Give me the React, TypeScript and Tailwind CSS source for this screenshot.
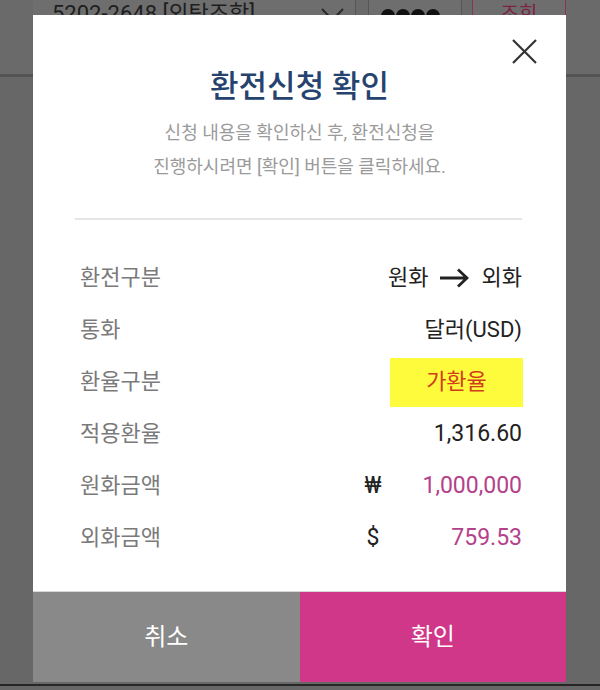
import React from "react";

function Row({ label, children }: { label: string; children: React.ReactNode }) {
  return (
    <div className="flex h-[52px] items-center justify-between">
      <span className="text-[22px] leading-[30px] text-[#7a7a7a]">{label}</span>
      <div className="flex items-center">{children}</div>
    </div>
  );
}

function Amount({ sym, value }: { sym: string; value: string }) {
  return (
    <div className="flex items-center">
      <span className="w-[24px] text-center text-[23px] leading-[30px] text-[#222]">{sym}</span>
      <span className="w-[137px] text-right text-[23px] leading-[30px] text-[#b4418a]">{value}</span>
    </div>
  );
}

export default function App() {
  return (
    <div className="relative h-[690px] w-[600px] overflow-hidden bg-[#676767] font-['Roboto','Noto_Sans_CJK_KR',sans-serif]">
      {/* background page */}
      <div className="flex h-full flex-col">
        <div className="flex h-[77px] items-start border-b-[3px] border-[#535353] bg-[#6a6a6a] pl-[33px]">
          <div className="-mt-[5px] flex h-[37px] w-[323px] items-center justify-between border-r border-[#555] bg-[#6e6e6e] pl-[19px] pr-[11px]">
            <span className="text-[22px] leading-[26px] text-[#1e1e1e]">5202-2648 [외탁조합]</span>
            <svg width="23" height="14" viewBox="0 0 23 14" className="mt-[2px]">
              <path d="M1 1L11.5 12L22 1" fill="none" stroke="#2a2a2a" strokeWidth="2" />
            </svg>
          </div>
          <div className="-mt-[5px] ml-[12px] flex h-[37px] w-[94px] items-center gap-[1px] border-x border-[#555] bg-[#6e6e6e] pl-[12px]">
            {[0, 1, 2, 3].map((i) => (
              <span key={i} className="mt-[4px] h-[14px] w-[14px] rounded-full bg-[#111]" />
            ))}
          </div>
          <div className="-mt-[5px] ml-[10px] flex h-[37px] w-[94px] items-center justify-center border border-[#8b3552] bg-[#6e6e6e]">
            <span className="text-[20px] leading-[26px] text-[#7d2444]">조회</span>
          </div>
        </div>
        <div className="flex-1" />
        <div className="mb-[4px] h-[2px] bg-[#262626]" />
      </div>

      {/* modal */}
      <div className="absolute left-[33px] top-[15px] flex h-[667px] w-[533px] flex-col bg-white">
        <button className="absolute right-[29px] top-[24px] h-[25px] w-[25px]" aria-label="닫기">
          <svg width="25" height="25" viewBox="0 0 25 25">
            <path d="M1 1L24 24M24 1L1 24" fill="none" stroke="#333" strokeWidth="2.2" />
          </svg>
        </button>
        <h2 className="pt-[54px] text-center text-[31px] font-medium leading-[36px] text-[#26436f]">
          환전신청 확인
        </h2>
        <p className="mt-[11px] text-center text-[18px] leading-[34px] text-[#9a9a9a]">
          신청 내용을 확인하신 후, 환전신청을
          <br />
          진행하시려면 [확인] 버튼을 클릭하세요.
        </p>
        <div className="ml-[42px] mr-[44px] mt-[34px] h-[2px] bg-[#e5e5e5]" />
        <div className="mt-[32px] pl-[47px] pr-[44px]">
          <Row label="환전구분">
            <span className="text-[22px] leading-[30px] text-[#222]">원화</span>
            <svg width="30" height="22" viewBox="0 0 30 22" className="ml-[10px] mr-[13px]">
              <path d="M1 11H28M19 2.5L28 11L19 19.5" fill="none" stroke="#222" strokeWidth="2.8" />
            </svg>
            <span className="text-[22px] leading-[30px] text-[#222]">외화</span>
          </Row>
          <Row label="통화">
            <span className="text-[22px] leading-[30px] text-[#222]">달러(USD)</span>
          </Row>
          <Row label="환율구분">
            <span className="-mr-[1px] flex h-[49px] w-[133px] items-center justify-center bg-[#fdfb3c] text-[22px] leading-[30px] text-[#d23c1c]">
              가환율
            </span>
          </Row>
          <Row label="적용환율">
            <span className="text-[23px] leading-[30px] text-[#222]">1,316.60</span>
          </Row>
          <Row label="원화금액">
            <Amount sym="₩" value="1,000,000" />
          </Row>
          <Row label="외화금액">
            <Amount sym="$" value="759.53" />
          </Row>
        </div>
        <div className="mt-auto grid h-[91px] grid-cols-2 border-t border-[#d8d8d8]">
          <button className="bg-[#898989] text-[24px] text-white">취소</button>
          <button className="bg-[#d13788] text-[24px] text-white">확인</button>
        </div>
      </div>
    </div>
  );
}
